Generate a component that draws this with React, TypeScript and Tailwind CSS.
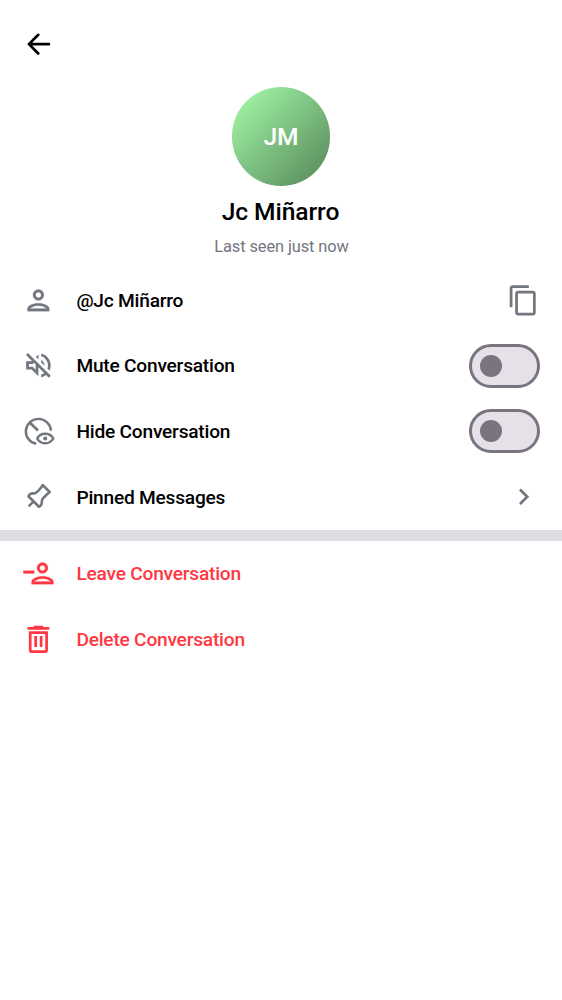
import type { ReactNode } from 'react';

const ICON = 'block h-[32.8px] w-[32.8px] shrink-0';

function Glyph({ children }: { children: ReactNode }) {
  return (
    <svg viewBox="0 0 24 24" className={ICON} fill="currentColor" aria-hidden="true">
      {children}
    </svg>
  );
}

const PersonIcon = () => (
  <Glyph>
    <path
      d="M12 6c1.1 0 2 .9 2 2s-.9 2-2 2-2-.9-2-2 .9-2 2-2m0 10c2.7 0 5.8 1.29 6 2H6c.23-.72 3.31-2 6-2m0-12C9.79 4 8 5.79 8 8s1.79 4 4 4 4-1.79 4-4-1.79-4-4-4zm0 10c-2.67 0-8 1.34-8 4v2h16v-2c0-2.66-5.33-4-8-4z"
      stroke="currentColor"
      strokeWidth="0.15"
    />
  </Glyph>
);

const MuteIcon = () => (
  <Glyph>
    <path d="M4.34 2.93L2.93 4.34 7.29 8.7 7 9H3v6h4l5 5v-6.59l4.18 4.18c-.65.49-1.38.88-2.18 1.11v2.06c1.34-.3 2.57-.92 3.61-1.75l2.05 2.05 1.41-1.41L4.34 2.93zM10 15.17L7.83 13H5v-2h2.83l.88-.88L10 11.41v3.76zM19 12c0 .82-.15 1.61-.41 2.34l1.53 1.53c.56-1.17.88-2.48.88-3.87 0-4.28-2.99-7.86-7-8.77v2.06c2.89.86 5 3.54 5 6.71zm-7-8l-1.88 1.88L12 7.76zm4.5 8c0-1.77-1.02-3.29-2.5-4.03v1.79l2.48 2.48c.01-.08.02-.16.02-.24z" />
  </Glyph>
);

const HideIcon = () => (
  <Glyph>
    <g fill="none" stroke="currentColor" strokeWidth="1.8">
      <path d="M21.2 11.4A9.2 9.2 0 1 0 10.4 21.1" />
      <path d="M5.2 5.2l6.5 6.2" strokeWidth="2" />
      <path d="M11.1 17.2c1.2-2.2 3.3-3.5 5.9-3.5s4.7 1.3 5.9 3.5c-1.2 2.2-3.3 3.5-5.9 3.5s-4.7-1.3-5.9-3.5z" />
    </g>
    <circle cx="17" cy="17.2" r="1.5" />
  </Glyph>
);

const PinIcon = () => (
  <Glyph>
    <g fill="none" stroke="currentColor" strokeWidth="1.9">
      <path
        d="M15.2 3.7l5.1 5.1-1.5 1.2c-1.3 1.3-3.2 2.9-4 4.300-.5 1-.1 2.500-.6 3.600-.3.700-.9 1.200-1.800 1.700l-7.700-7.700c.5-.9 1-1.500 1.700-1.800 1.100-.5 2.600-.1 3.600-.6 1.400-.8 3-2.700 4-4z"
        strokeLinejoin="round"
      />
      <path d="M8.5 15.700l-3.600 3.600" />
    </g>
  </Glyph>
);

const LeaveIcon = () => (
  <Glyph>
    <path
      d="M15 6c1.1 0 2 .9 2 2s-.9 2-2 2-2-.9-2-2 .9-2 2-2m0 10c2.7 0 5.8 1.29 6 2H9c.23-.72 3.31-2 6-2m0-12c-2.21 0-4 1.79-4 4s1.79 4 4 4 4-1.79 4-4-1.79-4-4-4zm0 10c-2.67 0-8 1.34-8 4v2h16v-2c0-2.66-5.33-4-8-4zM1 10h8v2H1z"
      stroke="currentColor"
      strokeWidth="0.15"
    />
  </Glyph>
);

const TrashIcon = () => (
  <Glyph>
    <path d="M8.5 2h7v1H20v2H4V3h4.5z" />
    <path fillRule="evenodd" d="M5 6h14v14.2c0 1-.8 1.8-1.8 1.8H6.8c-1 0-1.8-.8-1.8-1.8V6zm2 2v12h10V8H7z" />
    <path d="M9 9.5h2v8H9zM13 9.5h2v8h-2z" />
  </Glyph>
);

const CopyIcon = () => (
  <Glyph>
    <path d="M16 1H4c-1.1 0-2 .9-2 2v14h2V3h12V1zm3 4H8c-1.1 0-2 .9-2 2v14c0 1.1.9 2 2 2h11c1.1 0 2-.9 2-2V7c0-1.1-.9-2-2-2zm0 16H8V7h11v14z" />
  </Glyph>
);

const ChevronIcon = () => (
  <Glyph>
    <path d="M10.2 6.3L8.79 7.71 13.37 12.3l-4.58 4.59L10.2 18.3l6-6z" />
  </Glyph>
);

const BackIcon = () => (
  <Glyph>
    <path
      d="M11.9 5L5.1 11.800l6.800 6.800M5.100 11.800h14.600"
      fill="none"
      stroke="currentColor"
      strokeWidth="2"
      strokeLinejoin="round"
      strokeLinecap="round"
    />
  </Glyph>
);

function Toggle({ label }: { label: string }) {
  return (
    <button
      type="button"
      role="switch"
      aria-checked="false"
      aria-label={label}
      className="flex h-[43.8px] w-[71px] items-center rounded-full border-[3px] border-[#79747e] bg-[#e6e0e9] pl-[8px]"
    >
      <span className="h-[22px] w-[22px] rounded-full bg-[#79747e]" />
    </button>
  );
}

function Row({
  icon,
  label,
  trailing,
  danger = false,
}: {
  icon: ReactNode;
  label: string;
  trailing?: ReactNode;
  danger?: boolean;
}) {
  return (
    <li
      className={
        danger
          ? 'flex h-[65.6px] items-center px-[22px] text-[#ff3742]'
          : 'flex h-[65.6px] items-center px-[22px] text-[#72767e]'
      }
    >
      {icon}
      <span
        className={
          danger
            ? 'ml-[21.6px] flex-1 pt-[1.5px] text-[19.15px] font-medium tracking-[-0.22px]'
            : 'ml-[21.6px] flex-1 pt-[2.2px] text-[19.15px] font-medium tracking-[-0.22px] text-black'
        }
      >
        {label}
      </span>
      {trailing}
    </li>
  );
}

export default function App() {
  return (
    <main className="flex min-h-[1000px] w-full flex-col bg-white font-['Roboto',sans-serif]">
      <header className="flex h-[87px] items-center px-[22px] pt-[1.5px]">
        <button type="button" aria-label="Back" className="text-black">
          <BackIcon />
        </button>
      </header>

      <section className="flex h-[180.3px] flex-col items-center">
        <div className="flex h-[99px] w-[98.5px] shrink-0 items-center justify-center rounded-full bg-linear-to-br from-[#a8ffab] to-[#558658] pt-[2px] text-[24.6px] font-medium text-white">
          JM
        </div>
        <h1 className="mt-[10px] pr-[1px] text-[24.6px] leading-[32px] font-medium tracking-[-0.08px] text-black">
          Jc Miñarro
        </h1>
        <p className="mt-[8px] pl-[1px] text-[16.4px] leading-[22px] tracking-[-0.1px] text-[#72767e]">
          Last seen just now
        </p>
      </section>

      <ul>
        <Row icon={<PersonIcon />} label="@Jc Miñarro" trailing={<CopyIcon />} />
        <Row icon={<MuteIcon />} label="Mute Conversation" trailing={<Toggle label="Mute Conversation" />} />
        <Row icon={<HideIcon />} label="Hide Conversation" trailing={<Toggle label="Hide Conversation" />} />
        <Row icon={<PinIcon />} label="Pinned Messages" trailing={<ChevronIcon />} />
      </ul>

      <div className="h-[11.3px] bg-[#dbdde1]" />

      <ul>
        <Row danger icon={<LeaveIcon />} label="Leave Conversation" />
        <Row danger icon={<TrashIcon />} label="Delete Conversation" />
      </ul>
    </main>
  );
}
